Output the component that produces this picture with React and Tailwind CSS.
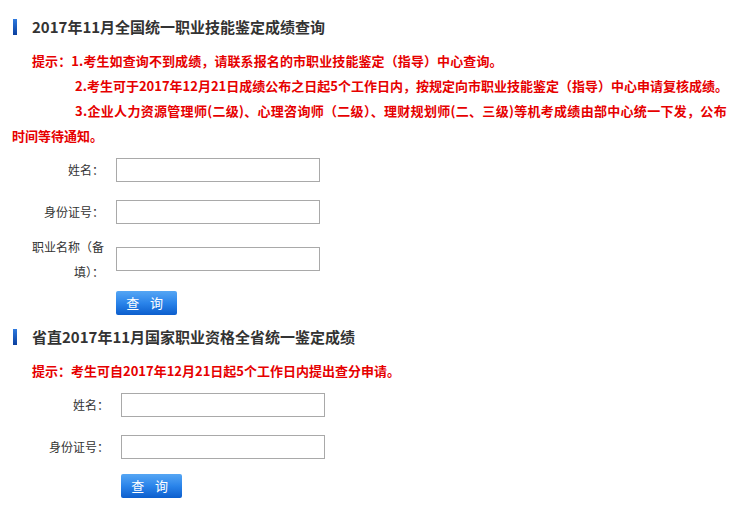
import React from "react";

const font = { fontFamily: '"Noto Sans CJK SC", "Liberation Sans", sans-serif' };

function SectionTitle({ children }) {
  return (
    <div className="flex items-center h-5 pl-[13px]">
      <span className="w-1 h-4 bg-gradient-to-b from-[#2f7be0] to-[#0b3f9e]"></span>
      <span className="ml-[15px] text-[15px] leading-5 font-bold text-[#333]">{children}</span>
    </div>
  );
}

function Field({ label, offset }) {
  return (
    <div className="flex items-center">
      <div
        className={
          "text-right text-[12px] text-[#333] leading-[25px] ml-[26px] " +
          (offset ? "w-[83px]" : "w-[78px]")
        }
      >
        {label}
      </div>
      <input
        type="text"
        className="ml-3 h-6 w-[204px] border border-[#a9a9a9] bg-white outline-none"
      />
    </div>
  );
}

function QueryButton({ offset }) {
  return (
    <button
      className={
        "h-6 w-[61px] rounded-[2px] bg-gradient-to-b from-[#55a6f4] via-[#2a84ea] to-[#0c5ecd] text-white text-[13px] leading-6 tracking-[0.3em] " +
        (offset ? "ml-[121px]" : "ml-[116px]")
      }
    >
      查 询
    </button>
  );
}

export default function App() {
  return (
    <div className="w-[745px] h-[508px] bg-white overflow-hidden" style={font}>
      <div className="pt-[17px]">
        <SectionTitle>2017年11月全国统一职业技能鉴定成绩查询</SectionTitle>

        <div className="mt-[11px] ml-3 w-[724px] text-[13px] leading-[25px] font-bold text-[#e60000]">
          <p className="indent-[20px] whitespace-nowrap tracking-[0.1px]">
            提示：1.考生如查询不到成绩，请联系报名的市职业技能鉴定（指导）中心查询。
          </p>
          <p className="indent-[63px] whitespace-nowrap">
            2.考生可于2017年12月21日成绩公布之日起5个工作日内，按规定向市职业技能鉴定（指导）中心申请复核成绩。
          </p>
          <p className="indent-[63px]">
            <span className="whitespace-nowrap tracking-[0.3px]">
              3.企业人力资源管理师(二级)、心理咨询师（二级）、理财规划师(二、三级)等机考成绩由部中心统一下发，公布
            </span>
            <br />
            时间等待通知。
          </p>
        </div>

        <div className="mt-[9px]">
          <Field label="姓名：" />
          <div className="mt-[17px]">
            <Field label="身份证号：" />
          </div>
          <div className="mt-[10px]">
            <Field label="职业名称（备填）：" />
          </div>
          <div className="mt-[5px]">
            <QueryButton />
          </div>
        </div>

        <div className="mt-[12px]">
          <SectionTitle>省直2017年11月国家职业资格全省统一鉴定成绩</SectionTitle>
        </div>

        <div className="mt-[11px] ml-3 text-[13px] leading-[25px] font-bold text-[#e60000]">
          <p className="indent-[20px] whitespace-nowrap">
            提示：考生可自2017年12月21日起5个工作日内提出查分申请。
          </p>
        </div>

        <div className="mt-[9px]">
          <Field label="姓名：" offset />
          <div className="mt-[17px]">
            <Field label="身份证号：" offset />
          </div>
          <div className="mt-[13px]">
            <QueryButton offset />
          </div>
        </div>
      </div>
    </div>
  );
}
